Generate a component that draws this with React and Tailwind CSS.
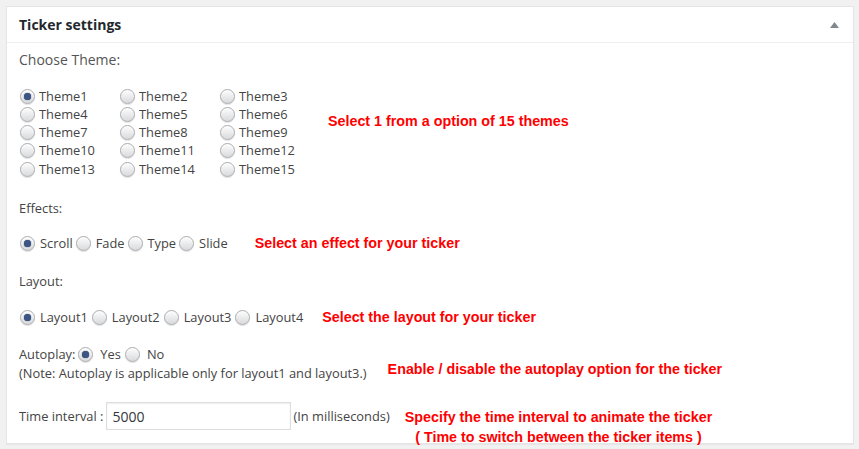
import React from 'react'

const Radio = ({ checked }) => (
  <span className="inline-flex shrink-0 items-center justify-center w-[15px] h-[15px] rounded-full border border-[#a9acb0] bg-gradient-to-b from-[#fdfdfd] to-[#d9dadc] shadow-[inset_0_1px_1px_rgba(255,255,255,0.9),0_1px_1px_rgba(0,0,0,0.12)]">
    {checked && <span className="w-[7px] h-[7px] rounded-full bg-[#3c5585] shadow-[0_0_1px_#1d2f52]" />}
  </span>
)

const Option = ({ label, checked, first, wide }) => (
  <span className={`inline-flex items-center ${first ? '' : wide ? 'ml-[4px]' : 'ml-[3px]'}`}>
    <Radio checked={checked} />
    <span className="ml-[5px]">{label}</span>
  </span>
)

const Note = ({ children, className }) => (
  <div className={`font-['Liberation_Sans',Arial,sans-serif] font-bold text-[14.3px] leading-[20px] text-[#ff0000] whitespace-nowrap ${className}`}>
    {children}
  </div>
)

const themes = Array.from({ length: 15 }, (_, i) => `Theme${i + 1}`)

export default function App() {
  return (
    <div className="min-h-[449px] bg-[#f1f1f1] pt-[6px] pl-[6px] pr-[5px] font-['Open_Sans',sans-serif] text-[12.85px] text-[#444]">
      <div className="bg-white border border-[#e5e5e5] shadow-[0_1px_1px_rgba(0,0,0,0.04)] pb-[13px]">
        <div className="flex items-center justify-between h-[36px] border-b border-[#eeeeee] pl-[12px] pr-[14px]">
          <span className="font-bold text-[14px] text-[#23282d]">Ticker settings</span>
          <svg width="9" height="6" viewBox="0 0 9 6">
            <path d="M4.5 0 L9 6 L0 6 Z" fill="#82878c" />
          </svg>
        </div>

        <div className="pl-[12px]">
          <div className="pt-[7px] text-[14px] leading-[20px] text-[#555]">Choose Theme:</div>

          <div className="flex items-start mt-[17px]">
            <div className="grid grid-cols-[100px_100px_100px] auto-rows-[18.25px] pl-[1px]">
              {themes.map((t, i) => (
                <span key={t} className="inline-flex items-center">
                  <Radio checked={i === 0} />
                  <span className="ml-[4px]">{t}</span>
                </span>
              ))}
            </div>
            <Note className="ml-[8px] mt-[24px]">Select 1 from a option of 15 themes</Note>
          </div>

          <div className="mt-[20px] leading-[20px]">Effects:</div>

          <div className="flex items-center mt-[15px] h-[20px] pl-[1px]">
            <Option label="Scroll" checked first />
            <Option label="Fade" />
            <Option label="Type" />
            <Option label="Slide" />
            <Note className="ml-[27px]">Select an effect for your ticker</Note>
          </div>

          <div className="mt-[18px] leading-[20px]">Layout:</div>

          <div className="flex items-center mt-[16px] h-[20px] pl-[1px]">
            <Option label="Layout1" checked first />
            <Option label="Layout2" wide />
            <Option label="Layout3" wide />
            <Option label="Layout4" wide />
            <Note className="ml-[19px]">Select the layout for your ticker</Note>
          </div>

          <div className="flex items-start mt-[17px]">
            <div>
              <div className="flex items-center h-[20px]">
                <span>Autoplay:</span>
                <span className="inline-flex items-center ml-[3px]">
                  <Radio checked />
                  <span className="ml-[7px]">Yes</span>
                </span>
                <span className="inline-flex items-center ml-[4px]">
                  <Radio />
                  <span className="ml-[7px]">No</span>
                </span>
              </div>
              <div className="leading-[18px]">(Note: Autoplay is applicable only for layout1 and layout3.)</div>
            </div>
            <Note className="ml-[21px] mt-[15px]">Enable / disable the autoplay option for the ticker</Note>
          </div>

          <div className="flex items-start mt-[20px] h-[28px]">
            <div className="flex items-center h-[28px]">
              <span>Time interval :</span>
              <input
                type="text"
                defaultValue="5000"
                className="ml-[3px] w-[185px] h-[28px] border border-[#dddddd] px-[5px] text-[14px] text-[#32373c] shadow-[inset_0_1px_2px_rgba(0,0,0,0.07)] outline-none font-['Open_Sans',sans-serif]"
              />
              <span className="ml-[2px]">(In milliseconds)</span>
            </div>
            <Note className="ml-[15px] mt-[5px] text-center">
              Specify the time interval to animate the ticker
              <br />
              ( Time to switch between the ticker items )
            </Note>
          </div>
        </div>
      </div>
    </div>
  )
}
